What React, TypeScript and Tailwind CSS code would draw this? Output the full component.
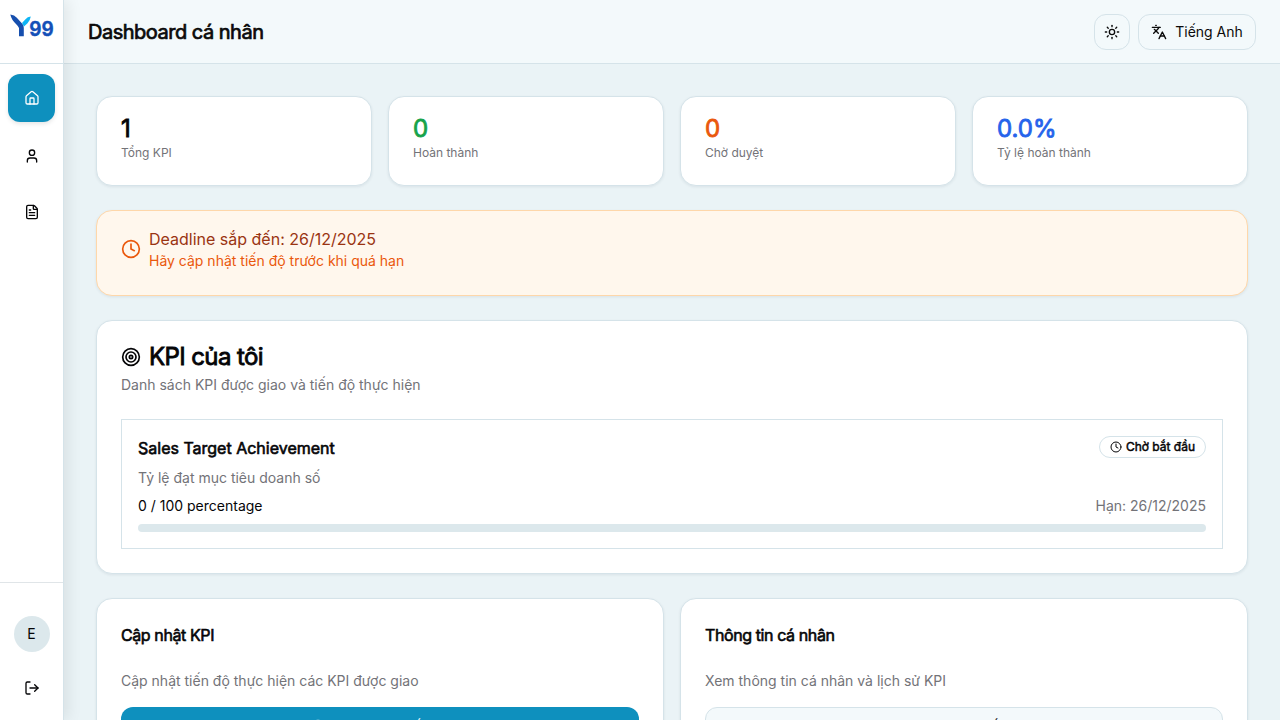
import type { ReactNode } from "react";
import { House, User, FileText, LogOut, Sun, Languages, Clock, Target } from "lucide-react";

const stats = [
  { value: "1", label: "Tổng KPI", color: "text-[#050507]" },
  { value: "0", label: "Hoàn thành", color: "text-[#16a34a]" },
  { value: "0", label: "Chờ duyệt", color: "text-[#ea580c]" },
  { value: "0.0%", label: "Tỷ lệ hoàn thành", color: "text-[#2563eb]" },
];

function Card({ className, children }: { className: string; children: ReactNode }) {
  return <div className={`rounded-2xl border shadow-[0_1px_3px_rgba(0,40,60,0.08)] ${className}`}>{children}</div>;
}

function Logo() {
  return (
    <svg width="46" height="26" viewBox="0 0 46 26" role="img" aria-label="Y99">
      <path d="M1.3 0.6 Q5.5 1.2 7.8 3.8 L13.5 10 Q14.8 11.5 14.8 14 L14.8 22.3 L10 22.3 L10 14 Q9.5 12.5 7 10 Q2.5 6 1.3 0.6 Z" fill="#164fae" />
      <path d="M13 9 L16.5 5.2 Q18.5 2.9 21.8 2.6 Q21 7 18.5 9.3 L15 12.6 Z" fill="#0eb5f5" />
      <text x="20.3" y="22" fill="#1450b8" stroke="#1450b8" strokeWidth="0.3" className="font-['Inter'] text-[19.5px] font-bold" textLength="24.4" lengthAdjust="spacingAndGlyphs">99</text>
    </svg>
  );
}

export default function App() {
  return (
    <div className="flex h-screen overflow-hidden bg-[#eaf3f6] font-['Inter',sans-serif] text-[#050507]">
      <aside className="z-10 flex w-16 shrink-0 flex-col border-r border-[#d5e3e9] bg-white shadow-[4px_0_14px_rgba(0,0,0,0.08)]">
        <div className="flex h-16 shrink-0 justify-center border-b border-[#d5e3e9] pt-3.5"><Logo /></div>
        <nav className="flex flex-1 flex-col items-center gap-2.5 pt-2.5">
          <button className="flex h-12 w-[47px] items-center justify-center rounded-xl bg-[#0e90be] text-white shadow-[0_2px_4px_rgba(0,0,0,0.1)]"><House size={16} strokeWidth={1.9} /></button>
          <button className="flex h-12 w-[47px] items-center justify-center"><User size={16} /></button>
          <button className="-mt-0.5 flex h-12 w-[47px] items-center justify-center"><FileText size={16} /></button>
        </nav>
        <div className="flex h-[138px] shrink-0 flex-col items-center border-t border-[#e0e5e8] pt-[33px]">
          <div className="flex size-9 items-center justify-center rounded-full bg-[#dce8ec] text-sm">E</div>
          <button className="mt-7"><LogOut size={16} /></button>
        </div>
      </aside>
      <div className="flex min-w-0 flex-1 flex-col">
        <header className="flex h-16 shrink-0 items-center justify-between border-b border-[#d5e3e9] bg-[#f3f9fb] px-6 text-[#0a0a0a]">
          <h1 className="text-xl tracking-tight [-webkit-text-stroke:0.72px]">Dashboard cá nhân</h1>
          <div className="flex gap-2">
            <button className="flex size-9 items-center justify-center rounded-xl border border-[#d5e3e9]"><Sun size={16} /></button>
            <button className="flex h-9 w-[118px] items-center justify-center gap-2 rounded-xl border border-[#d5e3e9] text-sm"><Languages size={16} />Tiếng Anh</button>
          </div>
        </header>
        <main className="flex flex-col gap-6 p-8">
          <section className="grid grid-cols-4 gap-4">
            {stats.map((s) => (
              <Card key={s.label} className="h-[90px] border-[#d5e3e9] bg-white px-6 pt-4">
                <div className={`text-2xl [-webkit-text-stroke:0.84px] ${s.color}`}>{s.value}</div>
                <div className="text-xs text-[#737378]">{s.label}</div>
              </Card>
            ))}
          </section>
          <Card className="flex h-[86px] gap-2 border-[#fed7aa] bg-[#fff7ed] px-6 pt-4">
            <Clock size={20} className="mt-3 text-[#ea580c]" />
            <div>
              <div className="text-base text-[#9a3412]">Deadline sắp đến: 26/12/2025</div>
              <div className="text-sm text-[#ea580c]">Hãy cập nhật tiến độ trước khi quá hạn</div>
            </div>
          </Card>
          <Card className="h-[254px] border-[#d5e3e9] bg-white px-6 pt-6">
            <div className="flex items-center gap-2">
              <Target size={20} />
              <h2 className="text-2xl leading-6 tracking-tight [-webkit-text-stroke:0.84px]">KPI của tôi</h2>
            </div>
            <p className="mt-1.5 text-sm text-[#737378]">Danh sách KPI được giao và tiến độ thực hiện</p>
            <div className="mt-6 h-[130px] border border-[#d5e3e9] p-4">
              <div className="flex items-start justify-between">
                <h3 className="text-base [-webkit-text-stroke:0.61px]">Sales Target Achievement</h3>
                <span className="flex h-[22px] w-[107px] items-center justify-center gap-1 rounded-full border border-[#d5e3e9] text-xs [-webkit-text-stroke:0.48px]"><Clock size={12} />Chờ bắt đầu</span>
              </div>
              <p className="mt-2 text-sm text-[#737378]">Tỷ lệ đạt mục tiêu doanh số</p>
              <div className="mt-2 flex justify-between text-sm">
                <span>0 / 100 percentage</span><span className="text-[#737378]">Hạn: 26/12/2025</span>
              </div>
              <div className="mt-2 h-2 rounded-full bg-[#dce8ec]" />
            </div>
          </Card>
          <section className="grid grid-cols-2 gap-4">
            <Card className="h-[174px] border-[#d5e3e9] bg-white p-6">
              <h3 className="text-base tracking-tight [-webkit-text-stroke:0.61px]">Cập nhật KPI</h3>
              <p className="mt-6 text-sm text-[#737378]">Cập nhật tiến độ thực hiện các KPI được giao</p>
              <button className="mt-4 flex h-10 w-full items-center justify-center gap-4 rounded-xl bg-[#0e90be] text-sm text-white"><Target size={16} />Cập nhật tiến độ</button>
            </Card>
            <Card className="h-[174px] border-[#d5e3e9] bg-white p-6">
              <h3 className="text-base tracking-tight [-webkit-text-stroke:0.61px]">Thông tin cá nhân</h3>
              <p className="mt-6 text-sm text-[#737378]">Xem thông tin cá nhân và lịch sử KPI</p>
              <button className="mt-4 flex h-10 w-full items-center justify-center rounded-xl border border-[#d5e3e9] bg-[#f3f9fb] text-sm">Xem chi tiết</button>
            </Card>
          </section>
        </main>
      </div>
    </div>
  );
}
